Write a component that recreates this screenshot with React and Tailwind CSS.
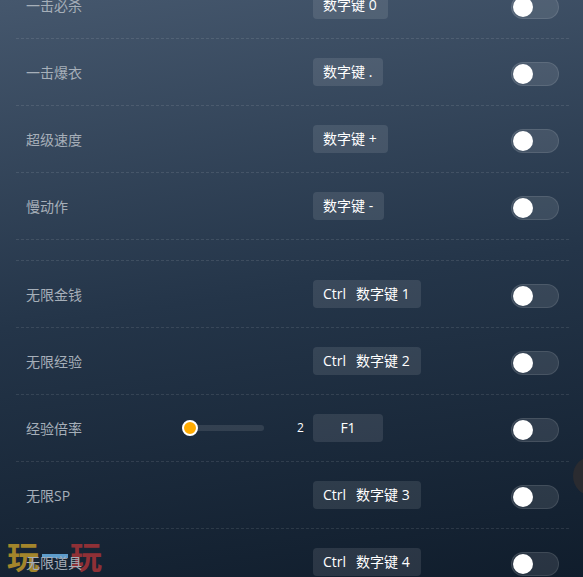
const topRows = [
  { label: "一击必杀", keys: ["数字键 0"] },
  { label: "一击爆衣", keys: ["数字键 ."] },
  { label: "超级速度", keys: ["数字键 +"] },
  { label: "慢动作", keys: ["数字键 -"] },
]

const bottomRows = [
  { label: "无限金钱", keys: ["Ctrl", "数字键 1"] },
  { label: "无限经验", keys: ["Ctrl", "数字键 2"] },
  { label: "经验倍率", keys: ["F1"], slider: true },
  { label: "无限SP", keys: ["Ctrl", "数字键 3"] },
  { label: "无限道具", keys: ["Ctrl", "数字键 4"] },
]

function Toggle() {
  return (
    <div className="mt-1 flex h-6 w-12 shrink-0 items-center rounded-full border border-white/10 bg-white/10 pl-[1px]">
      <div className="h-5 w-5 rounded-full bg-white"></div>
    </div>
  )
}

function Slider() {
  return (
    <div className="flex w-[131px] shrink-0 items-center">
      <div className="relative h-1.5 w-[82px] rounded-full bg-white/10">
        <div className="absolute top-1/2 left-0 h-4 w-4 -translate-y-1/2 rounded-full border-2 border-white bg-[#ffab00]"></div>
      </div>
      <span className="ml-[33px] text-xs text-white">2</span>
    </div>
  )
}

function Row({ row }) {
  const single = row.keys[0] === "F1"
  return (
    <div className="flex h-[67px] items-center border-b border-dashed border-white/10 px-2.5">
      <div className="w-[156px] shrink-0 pt-0.5 text-sm text-[#a6afb9]">{row.label}</div>
      {row.slider ? <Slider /> : <div className="w-[131px] shrink-0"></div>}
      <div className="flex-1">
        <div
          className={`inline-flex h-7 items-center justify-center gap-2.5 rounded bg-white/10 text-sm whitespace-pre text-white ${
            single ? "w-[70px]" : "pr-[11px] pl-2.5"
          }`}
        >
          {row.keys.map((k) => (
            <span key={k}>{k}</span>
          ))}
        </div>
      </div>
      <Toggle />
    </div>
  )
}

export default function App() {
  return (
    <div className="relative h-[577px] w-[583px] overflow-hidden bg-[linear-gradient(172deg,#45576d_0%,#243549_50%,#101d2c_100%)] font-['Open_Sans','Noto_Sans_CJK_SC',sans-serif]">
      {/* watermark */}
      <div className="absolute bottom-[4px] left-[7px] z-0 flex h-[36px] w-[95px] items-center justify-between font-['Noto_Sans_CJK_SC',sans-serif] text-[32px] leading-none font-bold">
        <span className="text-[#a3852b]">玩</span>
        <span className="text-[#8f3036]">玩</span>
      </div>
      <div className="absolute top-[554px] left-[42px] z-0 h-1 w-[26px] bg-[#5d9ccb]"></div>

      <div className="relative z-10 -mt-[28px] pr-[14px] pl-4">
        {topRows.map((row) => (
          <Row key={row.label} row={row} />
        ))}
        <div className="h-[21px] border-b border-dashed border-white/10"></div>
        {bottomRows.map((row) => (
          <Row key={row.label} row={row} />
        ))}
      </div>

      {/* floating button peeking in from the edge */}
      <div className="absolute top-[456px] left-[573px] z-20 h-10 w-10 rounded-full bg-[#2a2b30]"></div>
    </div>
  )
}
